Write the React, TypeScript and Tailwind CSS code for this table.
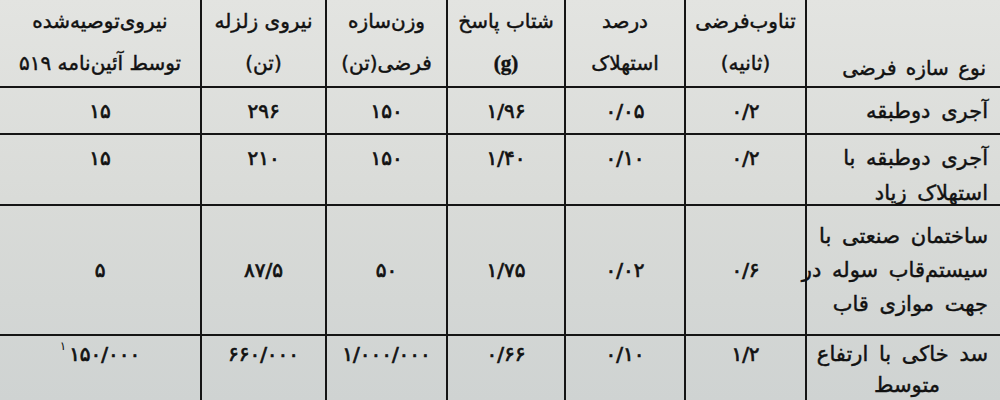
import React from 'react';

// Column order is right-to-left (dir="rtl")
const headers: { lines: string[]; align?: 'end' }[] = [
  { lines: ['نوع سازه فرضی'], align: 'end' },
  { lines: ['تناوب‌فرضی', '(ثانیه)'] },
  { lines: ['درصد', 'استهلاک'] },
  { lines: ['شتاب پاسخ', '(g)'] },
  { lines: ['وزن‌سازه', 'فرضی(تن)'] },
  { lines: ['نیروی زلزله', '(تن)'] },
  { lines: ['نیروی‌توصیه‌شده', 'توسط آئین‌نامه ۵۱۹'] },
];

interface Row {
  name: string[];
  values: string[];
  height: string;
  mode: 'center' | 'top';
}

const rows: Row[] = [
  {
    name: ['آجری دوطبقه'],
    values: ['۰/۲', '۰/۰۵', '۱/۹۶', '۱۵۰', '۲۹۶', '۱۵'],
    height: 'h-[47px]',
    mode: 'center',
  },
  {
    name: ['آجری دوطبقه با', 'استهلاک زیاد'],
    values: ['۰/۲', '۰/۱۰', '۱/۴۰', '۱۵۰', '۲۱۰', '۱۵'],
    height: 'h-[71px]',
    mode: 'top',
  },
  {
    name: ['ساختمان صنعتی با', 'سیستم‌قاب سوله در', 'جهت موازی قاب'],
    values: ['۰/۶', '۰/۰۲', '۱/۷۵', '۵۰', '۸۷/۵', '۵'],
    height: 'h-[130px]',
    mode: 'center',
  },
  {
    name: ['سد خاکی با ارتفاع', 'متوسط'],
    values: ['۱/۲', '۰/۱۰', '۰/۶۶', '۱/۰۰۰/۰۰۰', '۶۶۰/۰۰۰', '۱۵۰/۰۰۰'],
    height: 'h-[80px]',
    mode: 'top',
  },
];

const cols = 'grid grid-cols-[195px_121px_120px_118px_121px_125px_200px]';
const ink = '[-webkit-text-stroke:0.45px_#111]';

export default function App() {
  return (
    <div
      dir="rtl"
      className="w-[1000px] h-[400px] overflow-hidden bg-linear-to-b from-[#e3e4e1] via-[#d9dbd8] to-[#cfd3d2] text-[#111] font-['DejaVu_Sans',sans-serif]"
    >
      {/* Header */}
      <div className={`${cols} h-[88px] border-b-2 border-[#151515]`}>
        {headers.map((h, i) => (
          <div
            key={i}
            className={`flex flex-col text-[20px] ${ink} ${
              h.align === 'end' ? 'justify-end items-start pr-[14px] leading-[36px] [word-spacing:3px]' : 'items-center leading-[42px]'
            } ${i < headers.length - 1 ? 'border-l-2 border-[#151515]' : ''}`}
          >
            {h.lines.map((l, j) =>
              l === '(g)' ? (
                <span key={j} dir="ltr" className="font-['Liberation_Serif',serif] font-bold text-[21px]">
                  {l}
                </span>
              ) : (
                <span key={j} className="whitespace-nowrap">{l}</span>
              )
            )}
          </div>
        ))}
      </div>

      {/* Body */}
      {rows.map((r, ri) => (
        <div key={ri} className={`${cols} ${r.height} border-b-2 border-[#151515]`}>
          {/* Name cell */}
          <div
            className={`flex flex-col border-l-2 border-[#151515] pr-[12px] text-[21px] [word-spacing:4px] ${ink} ${
              r.mode === 'center' ? 'justify-center leading-[34px]' : ri === 1 ? 'pt-[6px] leading-[35px]' : 'pt-[3px] leading-[31px]'
            }`}
          >
            {r.name.map((l, j) => (
              <span
                key={j}
                className={`whitespace-nowrap ${ri === 3 && j === 1 ? 'pr-[48px]' : ''}`}
              >
                {l}
              </span>
            ))}
          </div>
          {/* Value cells */}
          {r.values.map((v, vi) => (
            <div
              key={vi}
              className={`flex justify-center text-[20px] tracking-[1px] [-webkit-text-stroke:0.7px_#111] ${
                r.mode === 'center' ? 'items-center' : ri === 1 ? 'pt-[6px] leading-[35px]' : 'pt-[3px] leading-[31px]'
              } ${vi < r.values.length - 1 ? 'border-l-2 border-[#151515]' : ''}`}
            >
              {ri === 3 && vi === 5 ? (
                <div dir="ltr" className="flex items-start">
                  <span className="text-[12px] leading-[14px] mr-[3px] [-webkit-text-stroke:0px]">۱</span>
                  <span>{v}</span>
                </div>
              ) : (
                <span>{v}</span>
              )}
            </div>
          ))}
        </div>
      ))}
    </div>
  );
}
